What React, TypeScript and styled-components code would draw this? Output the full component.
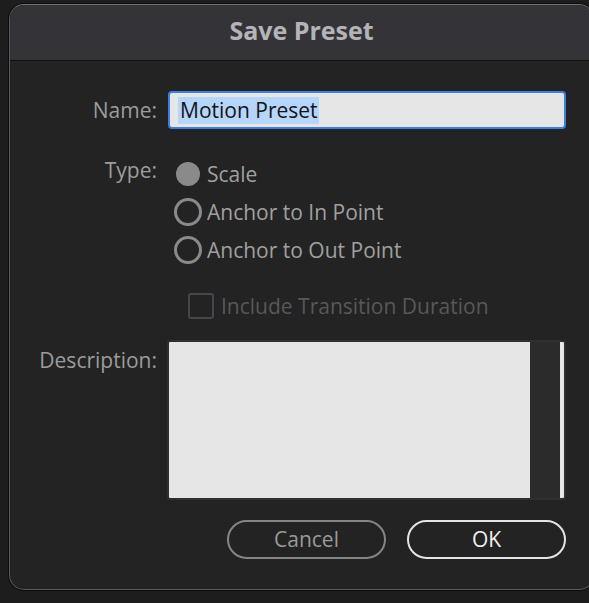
import React from "react";
import styled, { createGlobalStyle } from "styled-components";

const Global = createGlobalStyle`
  html, body { margin: 0; padding: 0; background: #1d1d1d; }
  body { font-family: "Open Sans", "Noto Sans", sans-serif; overflow: hidden; }
  * { box-sizing: border-box; }
`;

const Page = styled.div`
  width: 589px;
  height: 603px;
  padding: 4px 0 0 9px;
  overflow: hidden;
`;

const Dialog = styled.div`
  width: 585px;
  height: 586px;
  background: #232323;
  border: 1px solid #5a5a5a;
  border-top-color: #727272;
  border-radius: 15px;
  box-shadow: 0 0 0 1px #0c0c0c;
  overflow: hidden;
  display: flex;
  flex-direction: column;
`;

const TitleBar = styled.div`
  height: 56px;
  flex: none;
  background: #343438;
  border-bottom: 1px solid #111113;
  display: flex;
  align-items: center;
  justify-content: center;
  padding-bottom: 5px;
  font-weight: 700;
  font-size: 25px;
  color: #b4b4b8;
`;

const Body = styled.div`
  display: grid;
  grid-template-columns: 147px 1fr;
  column-gap: 11px;
  padding: 30px 27px 0 0;
`;

const Label = styled.div<{ $top?: number }>`
  justify-self: end;
  align-self: ${(p) => (p.$top !== undefined ? "start" : "center")};
  margin-top: ${(p) => p.$top ?? 0}px;
  font-size: 21px;
  line-height: 28px;
  color: #9c9c9c;
`;

const NameInput = styled.div`
  height: 38px;
  background: #e6e6e6;
  border: 2px solid #3d7fe0;
  border-radius: 4px;
  padding-left: 8px;
  display: flex;
  align-items: center;
  font-size: 21px;
  color: #141414;
`;

const Selected = styled.span`
  background: #b5d5fb;
  line-height: 27px;
  padding: 0 1px 0 2px;
`;

const RadioGroup = styled.div`
  margin-top: 26px;
  display: flex;
  flex-direction: column;
`;

const RadioRow = styled.div`
  height: 38px;
  display: flex;
  align-items: center;
  gap: 5px;
  margin-left: 6px;
  font-size: 21px;
  color: #a0a0a0;
`;

const RadioDot = styled.span<{ $checked?: boolean }>`
  flex: none;
  width: ${(p) => (p.$checked ? 24 : 28)}px;
  height: ${(p) => (p.$checked ? 24 : 28)}px;
  margin: ${(p) => (p.$checked ? "0 2px 0 2px" : "0")};
  border-radius: 50%;
  border: 3px solid #8a8a8a;
  background: ${(p) => (p.$checked ? "#8a8a8a" : "transparent")};
`;

const CheckRow = styled.div`
  grid-column: 2;
  height: 38px;
  margin-top: 18px;
  margin-left: 20px;
  display: flex;
  align-items: center;
  gap: 7px;
  font-size: 21px;
  color: #585858;
`;

const CheckBox = styled.span`
  flex: none;
  width: 26px;
  height: 26px;
  border: 2px solid #474747;
  border-radius: 3px;
`;

const TextArea = styled.div`
  margin-top: 15px;
  margin-left: -1px;
  height: 160px;
  background: #e6e6e6;
  border: 2px solid #2f2f2f;
  border-radius: 3px;
  display: flex;
  justify-content: flex-end;
  padding-right: 4px;
`;

const ScrollTrack = styled.div`
  width: 30px;
  background: #2b2b2b;
`;

const Buttons = styled.div`
  grid-column: 2;
  margin-top: 20px;
  display: flex;
  justify-content: flex-end;
  gap: 21px;
`;

const Button = styled.button<{ $primary?: boolean }>`
  width: 159px;
  height: 39px;
  border-radius: 20px;
  background: transparent;
  border: ${(p) => (p.$primary ? "2.5px solid #e4e4e4" : "2px solid #858585")};
  color: ${(p) => (p.$primary ? "#f0f0f0" : "#9a9a9a")};
  font-family: "Open Sans", sans-serif;
  font-size: 21px;
  padding: 0 0 2px;
`;

export default function App() {
  return (
    <Page>
      <Global />
      <Dialog>
        <TitleBar>Save Preset</TitleBar>
        <Body>
          <Label>Name:</Label>
          <NameInput>
            <Selected>Motion Preset</Selected>
          </NameInput>

          <Label $top={27}>Type:</Label>
          <RadioGroup>
            <RadioRow>
              <RadioDot $checked />
              Scale
            </RadioRow>
            <RadioRow>
              <RadioDot />
              Anchor to In Point
            </RadioRow>
            <RadioRow>
              <RadioDot />
              Anchor to Out Point
            </RadioRow>
          </RadioGroup>

          <CheckRow>
            <CheckBox />
            Include Transition Duration
          </CheckRow>

          <Label $top={21}>Description:</Label>
          <TextArea>
            <ScrollTrack />
          </TextArea>

          <Buttons>
            <Button>Cancel</Button>
            <Button $primary>OK</Button>
          </Buttons>
        </Body>
      </Dialog>
    </Page>
  );
}
